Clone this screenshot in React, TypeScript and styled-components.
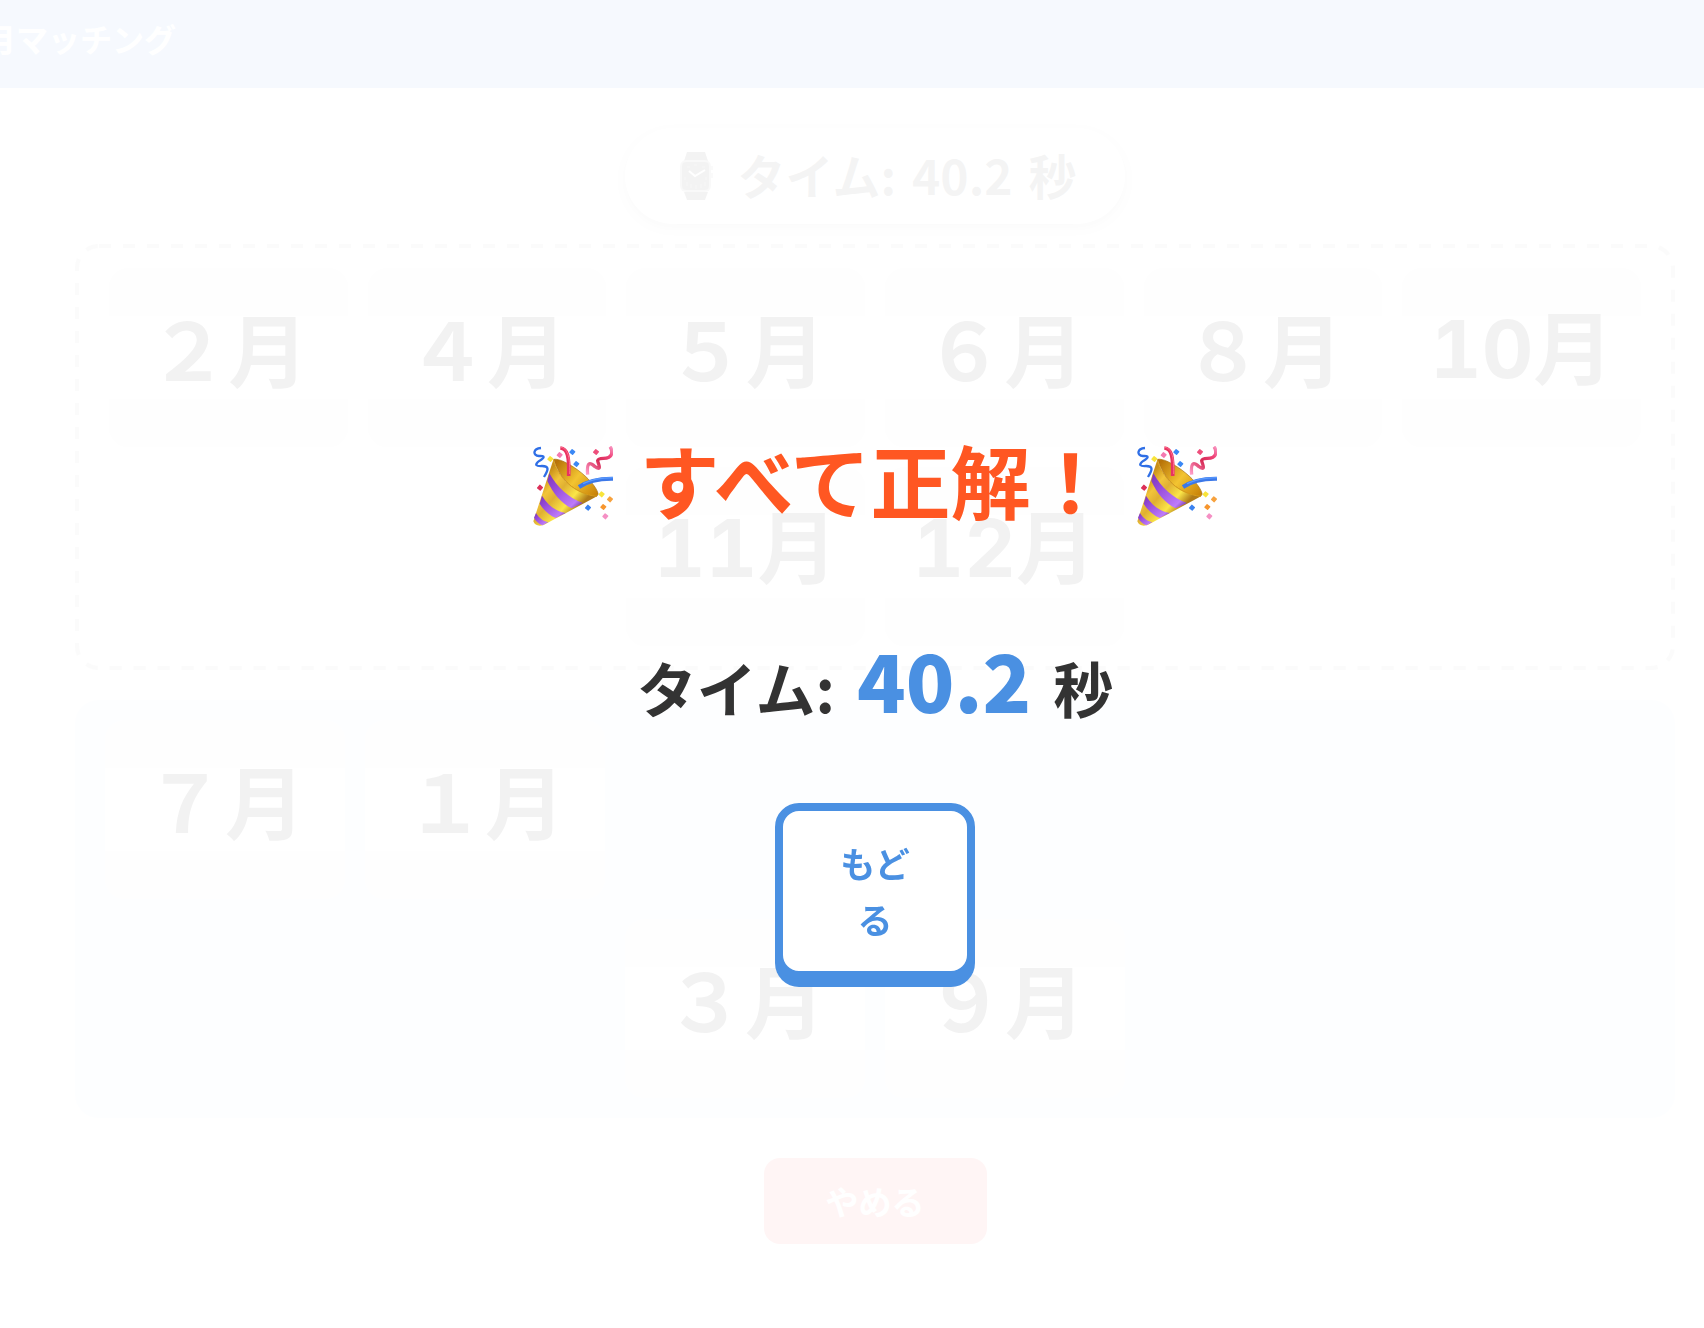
import React from "react";
import styled, { createGlobalStyle } from "styled-components";

const GlobalStyle = createGlobalStyle`
  *, *::before, *::after { box-sizing: border-box; }
  body {
    margin: 0;
    background: #f0f0f0;
    color: #333333;
    font-family: "Noto Sans CJK JP", "Noto Sans", sans-serif;
    font-weight: 700;
  }
`;

const Viewport = styled.div`
  overflow-x: clip;
  min-height: 100vh;
`;

const Shell = styled.div`
  margin: 0 -86px 0 -40px;
`;

const Header = styled.header`
  display: flex;
  align-items: center;
  height: 88px;
  padding: 0 24px 12px;
  background: #4a90e2;
  color: #ffffff;
`;

const PageTitle = styled.h1`
  margin: 0;
  font-size: 32px;
  line-height: 48px;
  white-space: nowrap;
`;

const Main = styled.main`
  display: flex;
  flex-direction: column;
  align-items: center;
  padding: 40px 115px 83px;
`;

const Timer = styled.div`
  display: flex;
  align-items: center;
  gap: 16px;
  padding: 10px 48px;
  margin-bottom: 20px;
  border-radius: 48px;
  background: #ffffff;
  box-shadow: 0 4px 8px rgba(0, 0, 0, 0.3);
`;

const TimerText = styled.span`
  display: flex;
  gap: 16px;
  padding-bottom: 4px;
  font-size: 48px;
  line-height: 72px;
  white-space: nowrap;
`;

const CardArea = styled.section<{ $kind: "answers" | "choices" }>`
  position: relative;
  display: flex;
  flex-wrap: wrap;
  justify-content: center;
  gap: 20px;
  width: 100%;
  padding: ${(p) => (p.$kind === "answers" ? "24px 34px" : "20px 30px")};
  border-radius: 24px;
  background: ${(p) => (p.$kind === "answers" ? "transparent" : "#d6e8f8")};
  margin-bottom: ${(p) => (p.$kind === "answers" ? "30px" : "40px")};
`;

const DashedOutline = styled.svg`
  position: absolute;
  inset: 0;
  width: 100%;
  height: 100%;
  pointer-events: none;

  rect {
    width: calc(100% - 4px);
    height: calc(100% - 4px);
  }
`;

const Card = styled.div<{ $tone: "placed" | "free" | "empty" }>`
  width: calc((100% - 100px) / 6);
  padding: 48px 0;
  border-radius: 20px;
  background: ${(p) => (p.$tone === "placed" ? "#dcdcdc" : "#e6e6e6")};
  visibility: ${(p) => (p.$tone === "empty" ? "hidden" : "visible")};
`;

const CardFace = styled.div`
  display: flex;
  justify-content: center;
  align-items: center;
  height: 83px;
  padding-bottom: 24px;
  background: #fafafa;
  color: #000000;
  font-size: 80px;
  line-height: 80px;
  white-space: nowrap;
`;

const HalfDigits = styled.span`
  font-family: Inter, sans-serif;
  font-variant-numeric: tabular-nums;
`;

const QuitButton = styled.button`
  padding: 18px 62px;
  border: 0;
  border-radius: 16px;
  background: #ff4040;
  color: #ffffff;
  font-family: inherit;
  font-size: 33px;
  font-weight: 700;
  line-height: 50px;
`;

const Overlay = styled.div`
  position: fixed;
  inset: 0;
  display: flex;
  flex-direction: column;
  align-items: center;
  justify-content: center;
  padding: 72px 0 0 46px;
  background: rgba(255, 255, 255, 0.95);
`;

const ResultTitle = styled.h2`
  display: flex;
  align-items: center;
  gap: 26px;
  margin: 0;
  color: #ff5722;
  font-size: 80px;
  line-height: 112px;
  white-space: nowrap;
`;

const ResultTitleText = styled.span`
  padding-bottom: 16px;
`;

const ResultTime = styled.p`
  display: flex;
  align-items: baseline;
  gap: 22px;
  margin: 64px 0 52px;
  font-size: 60px;
  line-height: 128px;
  white-space: nowrap;
`;

const Score = styled.strong`
  color: #4a90e2;
  font-size: 80px;
`;

const BackButton = styled.button`
  width: 200px;
  padding: 24px 48px;
  border: 8px solid #4a90e2;
  border-radius: 24px;
  background: #ffffff;
  box-shadow: 0 8px 0 #4a90e2;
  color: #4a90e2;
  font-family: inherit;
  font-size: 35px;
  font-weight: 700;
  line-height: 56px;
`;

const Popper = styled.svg`
  display: block;
  width: 80px;
  height: 80px;
`;

const confetti: [number, number, string][] = [
  [52, 39, "#f8e43a"],
  [80, 27, "#f47ab0"],
  [118, 18, "#3b88f5"],
  [130, 54, "#3b88f5"],
  [189, 18, "#ee4f7c"],
  [21, 125, "#dc3058"],
  [206, 145, "#f8e43a"],
  [231, 160, "#f7a23e"],
  [211, 183, "#f7962e"],
  [165, 185, "#3b82f0"],
  [217, 211, "#f590c4"],
];

function PartyPopper({ id }: { id: string }) {
  const url = (name: string) => `url(#${id}-${name})`;
  return (
    <Popper viewBox="0 0 240 240" aria-hidden="true">
      <defs>
        <linearGradient id={`${id}-cone`} x1="20" y1="110" x2="125" y2="200" gradientUnits="userSpaceOnUse">
          <stop offset="0" stopColor="#c98f18" />
          <stop offset="0.25" stopColor="#f2c53a" />
          <stop offset="0.45" stopColor="#e0b032" />
          <stop offset="0.75" stopColor="#fbe648" />
          <stop offset="1" stopColor="#b07a18" />
        </linearGradient>
        <linearGradient id={`${id}-inside`} x1="70" y1="50" x2="190" y2="145" gradientUnits="userSpaceOnUse">
          <stop offset="0" stopColor="#b87308" />
          <stop offset="0.5" stopColor="#f3c431" />
          <stop offset="1" stopColor="#c98308" />
        </linearGradient>
        <linearGradient id={`${id}-band`} x1="0" y1="0" x2="1" y2="1">
          <stop offset="0" stopColor="#7a35b8" />
          <stop offset="0.3" stopColor="#9549d8" />
          <stop offset="0.8" stopColor="#bd7bfa" />
          <stop offset="1" stopColor="#5e2585" />
        </linearGradient>
        <linearGradient id={`${id}-pink`} x1="160" y1="80" x2="240" y2="0" gradientUnits="userSpaceOnUse">
          <stop offset="0" stopColor="#ff9cc8" />
          <stop offset="0.45" stopColor="#d62a55" />
          <stop offset="0.75" stopColor="#f0457a" />
          <stop offset="1" stopColor="#f9a2cc" />
        </linearGradient>
      </defs>
      <path d="M62 40C92 34 184 100 195 142C197 152 184 154 168 148C116 134 80 96 62 40Z" fill={url("inside")} stroke="#a36a0a" strokeWidth="2" />
      <path d="M61 41C76 96 124 144 192 151L32 237Q8 244 1 226Z" fill={url("cone")} />
      <path d="M61 41C76 96 124 144 192 151" fill="none" stroke="#d79b18" strokeWidth="3" />
      <path d="M49 82C72 124 110 158 150 171L116 187C84 172 59 140 43 105Z" fill={url("band")} />
      <path d="M27 149C44 177 68 196 98 201L68 216C48 208 30 190 20 173Z" fill={url("band")} />
      <path d="M9 201C18 216 30 226 46 228L29 238C17 234 8 225 3 215Z" fill={url("band")} />
      <path d="M82 6C104 8 109 32 107 90" fill="none" stroke="#e83460" strokeWidth="11" />
      <path d="M84 4C102 6 112 30 110 84" fill="none" stroke="#ff6b8e" strokeWidth="3" />
      <path d="M138 123C162 106 196 97 242 98" fill="none" stroke="#3c78e8" strokeWidth="12" />
      <path d="M150 113C176 100 204 95 242 95" fill="none" stroke="#5b9bff" strokeWidth="4" />
      <path d="M24 6C0 8-2 28 18 30C38 29 34 36 20 44C2 57 10 61 27 60C50 60 46 72 33 93" fill="none" stroke="#2f6fe6" strokeWidth="7" />
      <path d="M164 86C160 44 172 50 186 62C208 76 196 56 194 44C198 30 228 46 235 26Q239 12 231 2" fill="none" stroke={url("pink")} strokeWidth="10" />
      {confetti.map(([x, y, color]) => (
        <rect key={`${x}-${y}`} x={x - 7} y={y - 7} width="14" height="14" rx="2" fill={color} transform={`rotate(40 ${x} ${y})`} />
      ))}
    </Popper>
  );
}

function WatchIcon() {
  return (
    <svg width="48" height="48" viewBox="0 0 48 48" aria-hidden="true">
      <path d="M14 0h18l3 9H11zM11 40h24l-3 8H14z" fill="#222222" />
      <rect x="7" y="8" width="31" height="32" rx="6" fill="#8a8a8a" />
      <rect x="9" y="10" width="27" height="28" rx="4" fill="#222222" />
      <path d="M38 14h2v4h-2zM38 21h2v5h-2z" fill="#999999" />
      <path d="M16 19l6 5 10-6" fill="none" stroke="#ffffff" strokeWidth="2" />
      <g fill="none" stroke="#666666" strokeWidth="1">
        <path d="M14 15h3M21 13h3M29 15h3M12 25v3M33 25v3" />
        <path d="M14 30v4M18 32v4M23 33v4M28 32v4M32 30v4" />
      </g>
    </svg>
  );
}

function MonthCard({ label, tone }: { label: string; tone: "placed" | "free" | "empty" }) {
  const digits = label.match(/^[0-9]+/)?.[0] ?? "";
  return (
    <Card $tone={tone}>
      <CardFace>
        <span>
          {digits && <HalfDigits>{digits}</HalfDigits>}
          {label.slice(digits.length)}
        </span>
      </CardFace>
    </Card>
  );
}

const placed = ["２月", "４月", "５月", "６月", "８月", "10月", "11月", "12月"];
const choices = ["７月", "１月", "", "", "", "", "３月", "９月"];

export default function App() {
  return (
    <Viewport>
      <GlobalStyle />
      <Shell>
        <Header>
          <PageTitle>月マッチング</PageTitle>
        </Header>
        <Main>
          <Timer>
            <WatchIcon />
            <TimerText>
              <span>タイム:</span>
              <span>40.2</span>
              <span>秒</span>
            </TimerText>
          </Timer>
          <CardArea $kind="answers">
            <DashedOutline aria-hidden="true">
              <rect x="2" y="2" rx="22" fill="none" stroke="#aaaaaa" strokeWidth="4" strokeDasharray="12 12" />
            </DashedOutline>
            {placed.map((label) => (
              <MonthCard key={label} label={label} tone="placed" />
            ))}
          </CardArea>
          <CardArea $kind="choices">
            {choices.map((label, i) => (
              <MonthCard key={i} label={label} tone={label ? "free" : "empty"} />
            ))}
          </CardArea>
          <QuitButton type="button">やめる</QuitButton>
        </Main>
      </Shell>
      <Overlay role="dialog" aria-label="すべて正解！">
        <ResultTitle>
          <PartyPopper id="left" />
          <ResultTitleText>すべて正解！</ResultTitleText>
          <PartyPopper id="right" />
        </ResultTitle>
        <ResultTime>
          <span>タイム:</span>
          <Score>40.2</Score>
          <span>秒</span>
        </ResultTime>
        <BackButton type="button">もどる</BackButton>
      </Overlay>
    </Viewport>
  );
}
